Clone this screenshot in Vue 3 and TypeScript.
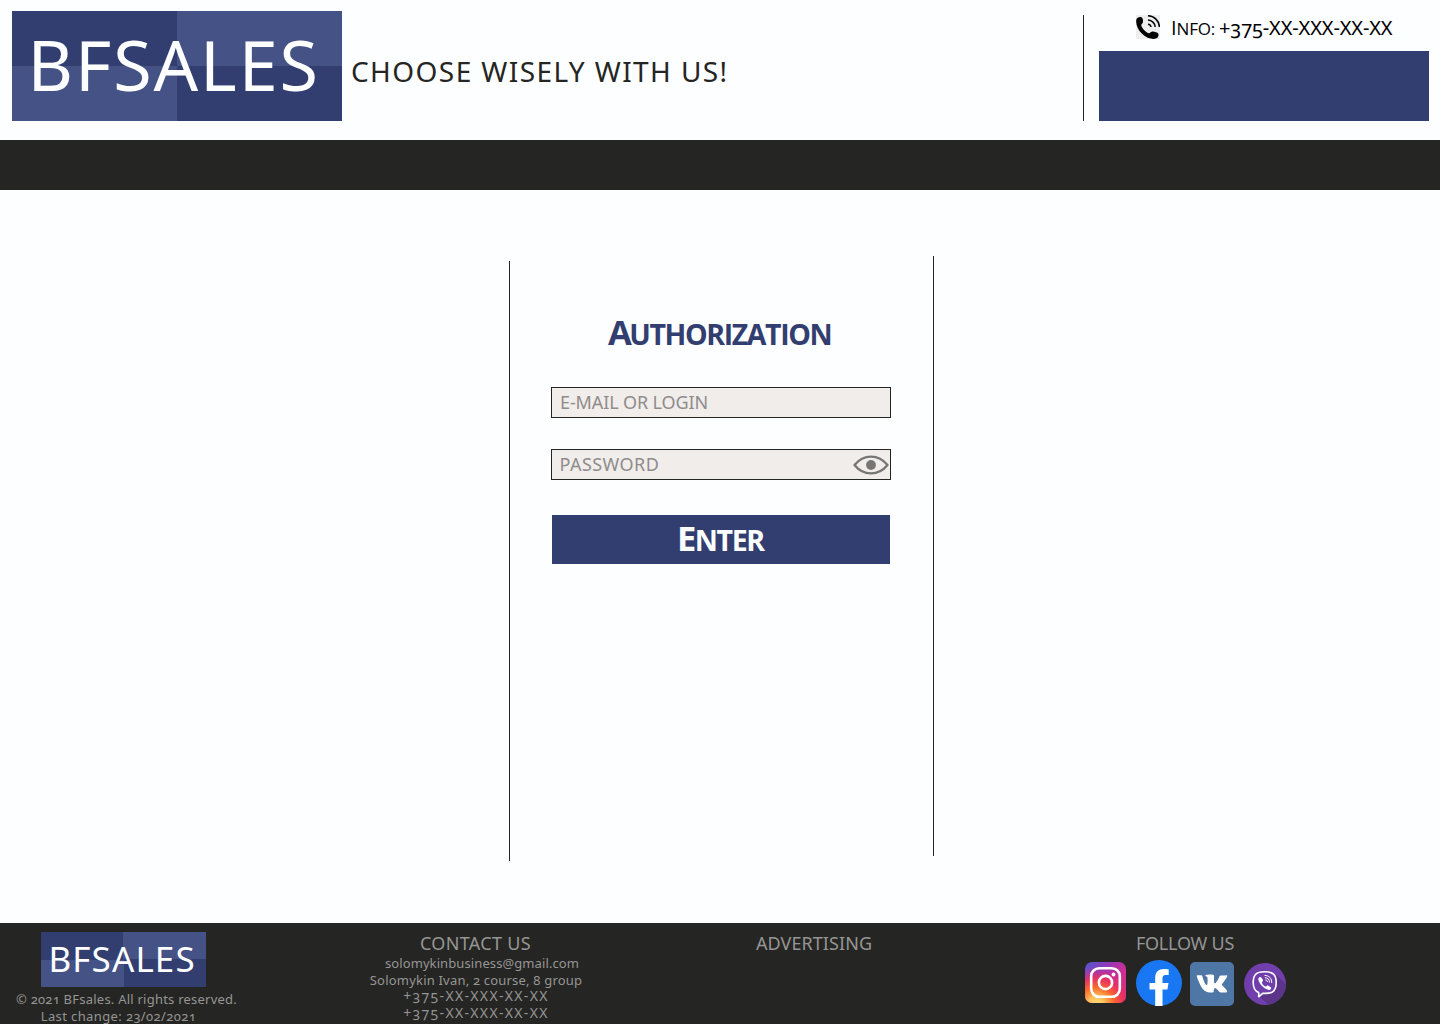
<script setup lang="ts">
import { ref } from 'vue'

const login = ref('')
const password = ref('')
const phone = '+375-XX-XXX-XX-XX'
</script>

<template>
  <div class="page">
    <header class="header">
      <div class="logo">BFSALES</div>
      <p class="tagline">CHOOSE WISELY WITH US!</p>
      <div class="rule header-rule"></div>
      <div class="info">
        <div class="info-line">
          <svg class="phone-icon" viewBox="0 0 24 24" width="24" height="24">
            <rect width="24" height="24" fill="#eeeeef" />
            <path d="M0.5 4C1.6 2.2 4 1.300 5.500 2.300C7 3.500 7.400 6 6.700 7.700C6.300 8.700 5.200 9.200 5.300 10.300C5.700 13.300 9.700 17.300 12.700 18.200C14 18.500 14.500 17 15.800 16.700C17.800 16.200 21.300 17.300 22.300 18.800C23 20.300 22 22.800 20 23.600C16.500 24.600 10.500 23.400 6 18.800C1.500 14.500-.7 8.500.5 4Z" fill="#000" />
            <g fill="none" stroke="#000" stroke-width="1.500">
              <path d="M12 9.300A3.200 3.200 0 0 1 15 12" />
              <path d="M12 5A7.500 7.500 0 0 1 19.200 12" />
              <path d="M12 .8A11.600 11.600 0 0 1 23.400 12" />
            </g>
          </svg>
          <span class="info-label">I<small>NFO:</small></span>
          <span class="info-phone">{{ phone }}</span>
        </div>
        <div class="info-box"></div>
      </div>
    </header>

    <nav class="nav"></nav>

    <main class="main">
      <div class="rule side-rule left"></div>
      <form class="form" @submit.prevent>
        <h1 class="title">AUTHORIZATION</h1>
        <input v-model="login" class="field" type="text" placeholder="E-MAIL OR LOGIN" />
        <div class="password">
          <input v-model="password" class="field" type="password" placeholder="PASSWORD" />
          <svg class="eye" viewBox="0 0 36 20" width="36" height="20">
            <path d="M1.500 10C10.500-1.200 25.500-1.200 34.500 10C25.500 21.200 10.500 21.200 1.500 10Z" fill="none" stroke="#777675" stroke-width="2.300" stroke-linejoin="round" />
            <circle cx="18" cy="10" r="4.900" fill="#777675" />
          </svg>
        </div>
        <button class="enter" type="submit"><span class="enter-text">ENTER</span></button>
      </form>
      <div class="rule side-rule"></div>
    </main>

    <footer class="footer">
      <section class="col">
        <div class="logo small">BFSALES</div>
        <p class="line copyright">© 2021 BFsales. All rights reserved.</p>
        <p class="line changed">Last change: 23/02/2021</p>
      </section>
      <section class="col">
        <h2 class="heading contact">CONTACT US</h2>
        <p class="line email">solomykinbusiness@gmail.com</p>
        <p class="line person">Solomykin Ivan, 2 course, 8 group</p>
        <p class="line phone">{{ phone }}</p>
        <p class="line phone">{{ phone }}</p>
      </section>
      <section class="col">
        <h2 class="heading advertising">ADVERTISING</h2>
      </section>
      <section class="col">
        <h2 class="heading follow">FOLLOW US</h2>
        <div class="socials">
          <svg class="instagram" viewBox="0 0 41 41" width="41" height="41">
            <defs>
              <linearGradient id="ig-base" x1="0" y1="0" x2="1" y2="1">
                <stop offset="0" stop-color="#4a5bd0" />
                <stop offset=".3" stop-color="#9338bb" />
                <stop offset=".6" stop-color="#d22e91" />
                <stop offset="1" stop-color="#dc2d78" />
              </linearGradient>
              <radialGradient id="ig-glow" cx=".28" cy="1.050" r=".95">
                <stop offset="0" stop-color="#ffdc7d" />
                <stop offset=".2" stop-color="#ffc65e" />
                <stop offset=".45" stop-color="#fb6b2c" />
                <stop offset=".7" stop-color="#ee3158" stop-opacity=".85" />
                <stop offset="1" stop-color="#c62fa0" stop-opacity="0" />
              </radialGradient>
            </defs>
            <rect width="41" height="41" rx="7" fill="url(#ig-base)" />
            <rect width="41" height="41" rx="7" fill="url(#ig-glow)" />
            <g fill="none" stroke="#fff" stroke-width="2.600">
              <rect x="6.200" y="6.200" width="28.600" height="28.600" rx="8" />
              <circle cx="20.500" cy="20.500" r="6.600" />
            </g>
            <circle cx="28.500" cy="12.500" r="1.900" fill="#fff" />
          </svg>
          <svg class="facebook" viewBox="0 0 46 46" width="46" height="46">
            <circle cx="23" cy="23" r="23" fill="#1977f3" />
            <path d="M19.200 46V29.600H13.500V23H19.200V18C19.200 12 22.500 9 27.900 9C30.200 9 32.700 9.400 32.700 9.400V15H29.900C27 15 26.500 16.700 26.500 18.600V23H32.500L31.400 29.600H26.500V46A23 23 0 0 1 19.200 46Z" fill="#fff" />
          </svg>
          <svg class="vk" viewBox="0 0 44 44" width="44" height="44">
            <rect width="44" height="44" rx="5" fill="#4f77a5" />
            <path transform="translate(-1.500 0)" d="M22.300 30.500H24.100C24.100 30.500 24.700 30.400 25 30.100C25.200 29.800 25.200 29.200 25.200 29.200C25.200 29.200 25.200 26.500 26.400 26.100C27.700 25.700 29.300 28.700 31 29.900C32.300 30.700 33.300 30.500 33.300 30.500L37.300 30.400C37.300 30.400 39.400 30.300 38.400 28.700C38.300 28.500 37.800 27.400 35.300 25C32.600 22.500 33 22.900 36.200 18.600C38.100 16 38.900 14.400 38.700 13.800C38.400 13.200 37 13.400 37 13.400H32.200C31.700 13.400 31.400 13.600 31.200 14C31.200 14 30.400 16 29.400 17.700C27.300 21.200 26.500 21.400 26.100 21.200C25.300 20.700 25.500 19.100 25.500 18C25.500 14.500 26 13.100 24.500 12.700C22.500 12.200 19 12.300 17.600 12.900C17 13.200 16.500 13.900 16.800 13.900C17.200 14 18 14.200 18.500 14.800C19.100 15.600 19.100 17.400 19.100 17.400C19.100 17.400 19.400 22.400 18.300 23C17.500 23.400 16.800 22.500 15.200 18.500C14.300 16.400 13.800 14.100 13.800 14.100C13.600 13.500 13.200 13.400 12.700 13.300H9C8.500 13.300 8.100 13.600 8.300 14.300C8.300 14.300 10.900 22.800 14.300 27C17.500 30.900 22.300 30.500 22.300 30.500Z" fill="#fff" />
          </svg>
          <svg class="viber" viewBox="0 0 42 42" width="42" height="42">
            <defs><clipPath id="viber-clip"><circle cx="21" cy="21" r="21" /></clipPath></defs>
            <circle cx="21" cy="21" r="21" fill="#703fab" />
            <path d="M31 11L45 24V45H28L15 33L28 29L33 23Z" fill="#5c3489" clip-path="url(#viber-clip)" />
            <path d="M20.500 8.800C12 8.800 9.200 12 9.200 19.500C9.200 24.500 10.500 28 14.700 29.600V33.800L18.700 30.300C28 31 32.200 28.500 32.200 19.500C32.200 11.500 28.800 8.800 20.500 8.800Z" fill="none" stroke="#fff" stroke-width="1.600" stroke-linejoin="round" />
            <path d="M14.500 15.200C15.300 13.900 16.500 13.500 17.300 14.600L19 17.100C19.500 18.100 17.900 18.900 17.900 19.500C18.400 21.600 19.800 23 21.800 23.600C22.700 23.700 23 22 24.100 22.400L26.800 24.200C27.800 25.200 26.200 27.200 24.900 27C19.700 25.700 15.300 21 14.300 16.500Z" fill="#fff" />
            <g fill="none" stroke="#fff" stroke-width="1" stroke-linecap="round">
              <path d="M20.900 12.400C25.100 12.500 27.800 15.200 27.700 19.600" />
              <path d="M21.300 14.700C23.900 14.900 25.400 16.400 25.500 19" />
              <path d="M21.700 17C22.900 17.100 23.300 17.600 23.400 18.600" />
            </g>
          </svg>
        </div>
      </section>
    </footer>
  </div>
</template>

<style>
body {
  margin: 0;
  background: #fdfeff;
}
</style>

<style scoped>
.page {
  display: flex;
  flex-direction: column;
  width: 1440px;
  height: 1024px;
  overflow: hidden;
  background: #fdfeff;
  color: #252523;
  font-family: "Noto Sans", "Open Sans", sans-serif;
  font-variant-numeric: oldstyle-nums;
  white-space: nowrap;
}

p,
h1,
h2 {
  margin: 0;
  font-weight: 400;
}

.header {
  display: flex;
  align-items: flex-start;
  box-sizing: border-box;
  height: 140px;
  padding: 11px 11px 0 12px;
}

.logo {
  box-sizing: border-box;
  width: 330px;
  height: 110px;
  padding-left: 15.500px;
  background: conic-gradient(#455285 0 25%, #323e6f 0 50%, #455285 0 75%, #323e6f 0);
  color: #fdfeff;
  font-size: 70px;
  line-height: 106px;
  letter-spacing: 1.9px;
}

.logo.small {
  width: 165px;
  height: 55px;
  padding-left: 7.500px;
  font-size: 35px;
  line-height: 53px;
  letter-spacing: 1.1px;
}

.tagline {
  margin-left: 9px;
  font-size: 28px;
  line-height: 120px;
  letter-spacing: 1.42px;
}

.rule {
  width: 1px;
  background: #252523;
}

.header-rule {
  height: 106px;
  margin: 4px 15px 0 auto;
}

.info {
  width: 330px;
  color: #000;
}

.info-line {
  display: flex;
  height: 40px;
  padding-left: 37px;
  font-size: 20px;
  line-height: 33px;
}

.phone-icon {
  margin: 4px 11px 0 0;
}

.info-label {
  width: 48px;
  font-family: "Open Sans", "Noto Sans", sans-serif;
}

.info-label small {
  font-size: 17px;
  letter-spacing: -0.2px;
}

.info-phone {
  letter-spacing: -0.12px;
}

.info-box {
  height: 70px;
  background: #323e6f;
}

.nav {
  height: 50px;
  background: #252523;
}

.main {
  display: flex;
  width: 425px;
  height: 667px;
  margin-left: 509px;
  padding-top: 66px;
}

.side-rule {
  height: 600px;
}

.side-rule.left {
  margin-top: 5px;
}

.form {
  display: flex;
  flex: 1;
  flex-direction: column;
  align-items: flex-start;
  padding: 51px 0 0 41px;
}

.title {
  height: 80px;
  margin-left: 57px;
  color: #323e6f;
  font-family: "Open Sans", "Noto Sans", sans-serif;
  font-size: 28.500px;
  font-weight: 700;
  line-height: 49px;
  letter-spacing: -1.4px;
}

.title::first-letter,
.enter-text::first-letter {
  font-size: 34.500px;
  letter-spacing: -2.500px;
}

.field {
  display: block;
  box-sizing: border-box;
  width: 340px;
  height: 31px;
  padding: 0 8px 1px;
  border: 1px solid #252523;
  border-radius: 0;
  outline: none;
  background: #f1edeb;
  color: #252523;
  font: 18px "Noto Sans", "Open Sans", sans-serif;
  letter-spacing: -0.12px;
}

.field::placeholder {
  color: #8f8c8b;
  opacity: 1;
}

.password {
  position: relative;
  margin: 31px 0 35px;
}

.password .field {
  padding: 0 42px 2px 7.500px;
  letter-spacing: 0.45px;
}

.eye {
  position: absolute;
  top: 5.500px;
  right: 2.500px;
}

.enter {
  width: 338px;
  height: 49px;
  margin-left: 1px;
  padding: 0 0 0 125px;
  border: 0;
  background: #323e6f;
  color: #fdfeff;
  font: 700 28.500px/46px "Open Sans", "Noto Sans", sans-serif;
  letter-spacing: -1.400px;
  text-align: left;
}

.enter-text {
  display: block;
  height: 49px;
}

.enter-text::first-letter {
  letter-spacing: -1.500px;
}

.footer {
  display: grid;
  grid-template-columns: 247px 457px 219px 509px;
  height: 101px;
  background: #252523;
  color: #959594;
}

.footer .col:last-child {
  margin: 0 -8px 0 8px;
}

.col {
  display: flex;
  flex-direction: column;
  align-items: center;
  padding-top: 8px;
}

.small {
  margin: 1px 0 4px;
}

.heading {
  font-size: 18px;
  line-height: 24px;
}

.contact {
  letter-spacing: 0.33px;
}

.advertising {
  margin-left: 1px;
  letter-spacing: 0.08px;
}

.follow {
  margin-right: 1px;
  letter-spacing: -0.23px;
}

.line {
  font-size: 13px;
  line-height: 16.500px;
}

.copyright {
  margin-left: 6px;
  letter-spacing: 0.23px;
}

.changed {
  margin-right: 10px;
  letter-spacing: 0.38px;
}

.email {
  margin-left: 13px;
  letter-spacing: 0.1px;
}

.person {
  margin-left: 1px;
  letter-spacing: 0.2px;
}

.phone {
  margin-left: 1px;
  font-size: 14px;
  letter-spacing: 1.33px;
}

.socials {
  display: flex;
  align-items: flex-start;
  margin-top: 5px;
}

.instagram {
  margin: 2px 10px 0 0;
}

.facebook {
  margin-right: 8px;
}

.vk {
  margin: 2px 10px 0 0;
}

.viber {
  margin-top: 3px;
}
</style>
